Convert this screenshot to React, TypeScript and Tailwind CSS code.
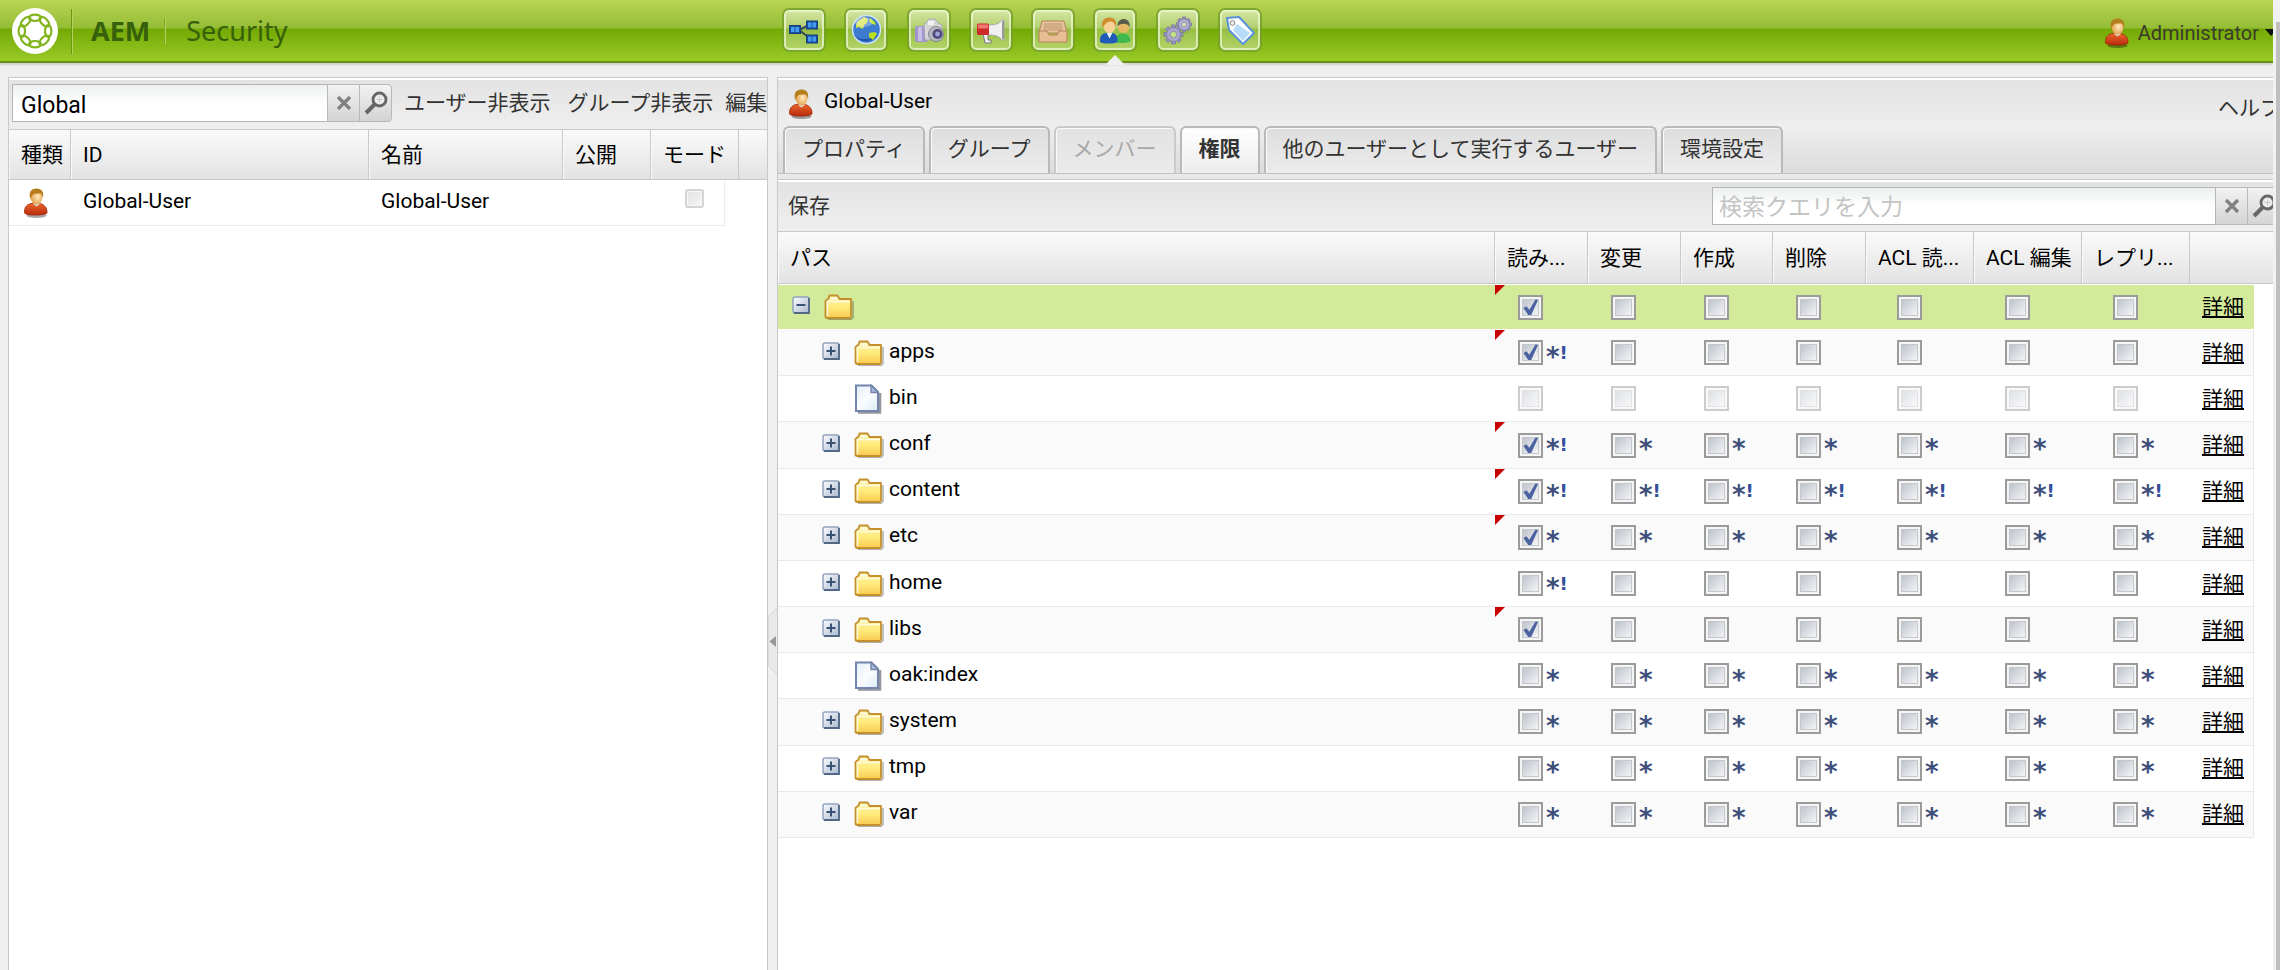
import React from "react";

type Mark = "" | "*" | "*!";

interface Row {
  name: string;
  kind: "root" | "folder" | "file";
  checked: boolean;
  first: Mark;
  rest: Mark;
  disabled?: boolean;
}

const rows: Row[] = [
  { name: "", kind: "root", checked: true, first: "", rest: "" },
  { name: "apps", kind: "folder", checked: true, first: "*!", rest: "" },
  { name: "bin", kind: "file", checked: false, first: "", rest: "", disabled: true },
  { name: "conf", kind: "folder", checked: true, first: "*!", rest: "*" },
  { name: "content", kind: "folder", checked: true, first: "*!", rest: "*!" },
  { name: "etc", kind: "folder", checked: true, first: "*", rest: "*" },
  { name: "home", kind: "folder", checked: false, first: "*!", rest: "" },
  { name: "libs", kind: "folder", checked: true, first: "", rest: "" },
  { name: "oak:index", kind: "file", checked: false, first: "*", rest: "*" },
  { name: "system", kind: "folder", checked: false, first: "*", rest: "*" },
  { name: "tmp", kind: "folder", checked: false, first: "*", rest: "*" },
  { name: "var", kind: "folder", checked: false, first: "*", rest: "*" },
];

const permissions = ["読み...", "変更", "作成", "削除", "ACL 読...", "ACL 編集", "レプリ..."];

function Person() {
  return (
    <svg width="26" height="32" viewBox="0 0 26 32" className="shrink-0" aria-hidden="true">
      <defs>
        <linearGradient id="coat" x1="0" y1="0" x2="0" y2="1">
          <stop offset="0" stopColor="#e9662b" />
          <stop offset="1" stopColor="#b92a0c" />
        </linearGradient>
        <radialGradient id="face" cx=".6" cy=".45" r=".6">
          <stop offset="0" stopColor="#ffe9bf" />
          <stop offset="1" stopColor="#e2a04a" />
        </radialGradient>
      </defs>
      <ellipse cx="13.500" cy="28.500" rx="10" ry="2.500" fill="#000" opacity=".35" />
      <path d="M1.500 26c-.5-5 2-8.500 6.500-9.500h9c4.500 1 7.300 4.500 7 9.500-2 2.500-20.500 3-22.500 0z" fill="url(#coat)" stroke="#9f2409" strokeWidth=".8" />
      <path d="M9.500 16.500l4 3 4-3z" fill="#ddd" />
      <ellipse cx="13.500" cy="10.500" rx="5.800" ry="7.200" fill="url(#face)" />
      <path d="M7.200 12C5.500 5 8 1.500 13.500 1.500S21 5 20 11c-.8-2-1.300-4-3-4.800-3 .6-5-.2-7 1.300-1.600 1-1.600 3-2.800 4.500z" fill="#b57d1b" />
    </svg>
  );
}

function Logo() {
  return (
    <svg width="46" height="46" viewBox="0 0 46 46" aria-hidden="true">
      <circle cx="23" cy="23" r="23" fill="#fff" />
      <g fill="none" stroke="#82b41e" strokeWidth="2.200">
        {[0, 45, 90, 135, 180, 225, 270, 315].map((a) => (
          <ellipse key={a} cx="23" cy="9.800" rx="6" ry="3.200" transform={"rotate(" + a + " 23 23)"} />
        ))}
      </g>
    </svg>
  );
}

const gearTeeth = [0, 45, 90, 135, 180, 225, 270, 315];

const tools: { label: string; art: React.ReactNode }[] = [
  {
    label: "Sites",
    art: (
      <g>
        <path d="M11 16L23 10M11 16l12 9" stroke="#37475d" strokeWidth="2" fill="none" />
        <g fill="#174f9c" stroke="#173f7c">
          <rect x="1.500" y="11.500" width="11" height="8" />
          <rect x="18.500" y="7" width="11" height="8" />
          <rect x="18.500" y="21" width="11" height="8" />
        </g>
        <g fill="#469cf2">
          <rect x="3" y="13" width="3.500" height="5" />
          <rect x="7.500" y="13" width="3.500" height="5" />
          <rect x="20" y="8.500" width="3.500" height="5" />
          <rect x="24.500" y="8.500" width="3.500" height="5" />
          <rect x="20" y="22.500" width="3.500" height="5" />
          <rect x="24.500" y="22.500" width="3.500" height="5" />
        </g>
      </g>
    ),
  },
  {
    label: "Web",
    art: (
      <g>
        <circle cx="16.500" cy="15.500" r="14" fill="#3d7bd0" stroke="#cfe3f5" strokeWidth="1.500" />
        <path d="M4 21c5 8 19 9 24-1-3 5-18 8-24 1z" fill="#1e54a6" />
        <path d="M8 7l6-4 4 2-1 4-3 2-1 4-4-2-3 1c0-3 0-5 2-7z" fill="#d9e74e" />
        <path d="M20 4l5 4 1 3-4-1-3-3zM19 19l6-1 2 2-4 6-4-3z" fill="#b9e11d" />
        <ellipse cx="14" cy="8" rx="9" ry="5" fill="#fff" opacity=".3" />
      </g>
    ),
  },
  {
    label: "Assets",
    art: (
      <g>
        <rect x="2" y="12" width="13" height="16" rx="2" fill="#a294cf" />
        <rect x="5" y="13" width="4" height="14" fill="#c8c0e4" />
        <path d="M11 11l5-6h6l3 4 4 2v15H12z" fill="#d6d6d8" stroke="#aaaaae" />
        <rect x="15" y="7" width="6" height="4" fill="#f2f2f4" />
        <circle cx="23" cy="20" r="7.500" fill="#b7b7c0" stroke="#85858f" />
        <circle cx="24.500" cy="20" r="5" fill="#4e4a7c" />
        <circle cx="24.500" cy="20" r="2.400" fill="#9fa5d9" />
      </g>
    ),
  },
  {
    label: "Campaigns",
    art: (
      <g>
        <path d="M8 19h5v7h3v3h-6z" fill="#f1f1f1" stroke="#777" />
        <path d="M13 11c7 0 11-1 14-5h2v20h-2c-3-4-7-5-14-5z" fill="#f0f0f0" stroke="#a8a8a8" />
        <path d="M28 7v18" stroke="#999" strokeWidth="2" />
        <rect x="2" y="9.500" width="12" height="11.500" rx="1.500" fill="#cb2a28" />
        <rect x="3" y="10.500" width="10" height="4" fill="#ef7a70" />
      </g>
    ),
  },
  {
    label: "Inbox",
    art: (
      <g stroke="#b78356">
        <path d="M5 7h22l3 12H2z" fill="#e5c4a2" />
        <path d="M7 9h18l1 8H6z" fill="#d3ab84" stroke="none" />
        <path d="M2 17h8l2 4h8l2-4h8v11H2z" fill="#e8bd93" />
      </g>
    ),
  },
  {
    label: "Users",
    art: (
      <g>
        <path d="M17 28c0-6 2-8.500 7-8.500s7.500 3 7.500 7.500c-3 2.500-11 2.500-14.500 1z" fill="#41b94c" />
        <circle cx="24.500" cy="13.500" r="5.500" fill="#e6b765" />
        <path d="M18.500 12c0-5 3-7 6-7s7 2 6 8c-2-4-8-4-12-1z" fill="#575c4c" />
        <path d="M1 28c-.5-6 2-9.500 9-9.500s9 3.500 8.500 9.500c-4 2-14 2-17.500 0z" fill="#1f5bb7" />
        <path d="M7.500 18.500l3 6 3-6z" fill="#eef3fa" />
        <ellipse cx="10.500" cy="12" rx="6" ry="7" fill="#f7d193" />
        <path d="M3.500 14C2 7 5 3.500 10.500 3.500S18 7 16.500 13c-1-4-2-5-4-5.500-5 0-6 2-9 6.500z" fill="#cf8b2c" />
      </g>
    ),
  },
  {
    label: "Tools",
    art: (
      <g fill="#9793bd" stroke="#716d9d" strokeWidth=".6">
        {gearTeeth.map((a) => (
          <rect key={a} x="9.500" y="11" width="4" height="5" transform={"rotate(" + a + " 11.500 20.500)"} />
        ))}
        {gearTeeth.map((a) => (
          <rect key={"s" + a} x="20.300" y="3" width="3.400" height="4" transform={"rotate(" + a + " 22 10.500)"} />
        ))}
        <circle cx="11.500" cy="20.500" r="7" fill="#aaa6ce" />
        <circle cx="22" cy="10.500" r="5.500" fill="#b5b1d5" />
        <circle cx="11.500" cy="20.500" r="3.200" fill="#c4e089" />
        <circle cx="22" cy="10.500" r="2.300" fill="#d9ecb2" />
      </g>
    ),
  },
  {
    label: "Tags",
    art: (
      <g>
        <path d="M3 4l12-1 15 16-11 11L5 16z" fill="#fff" stroke="#5b93d8" strokeWidth="2" strokeLinejoin="round" />
        <path d="M13 10l13 9-7 8L9 16z" fill="#b7dcf9" />
        <circle cx="8.500" cy="9" r="2.400" fill="#eee" stroke="#888" />
      </g>
    ),
  },
];

function Folder() {
  return (
    <svg width="30" height="26" viewBox="0 0 30 26" className="shrink-0" aria-hidden="true">
      <defs>
        <linearGradient id="fold" x1="0" y1="0" x2="0" y2="1">
          <stop offset="0" stopColor="#fdf3ad" />
          <stop offset=".5" stopColor="#ffec7d" />
          <stop offset="1" stopColor="#f8c94f" />
        </linearGradient>
      </defs>
      <path d="M4 25.500h23l2-2V7" fill="none" stroke="#000" opacity=".3" strokeWidth="1.500" />
      <path d="M1.500 22.500V7l3-2.500 1-3h8l2 3.500h11.500v17.500q0 1.500-1.500 1.500h-22.500q-1.500 0-1.500-1.500z" fill="url(#fold)" stroke="#c48f2e" strokeWidth="1.800" strokeLinejoin="round" />
      <path d="M3.500 22V7.500h22" fill="none" stroke="#fffbe0" strokeWidth="1.500" />
      <path d="M6.500 4.500h7" stroke="#fffbe0" strokeWidth="2" />
    </svg>
  );
}

function Sheet() {
  return (
    <svg width="30" height="30" viewBox="0 0 30 30" className="shrink-0" aria-hidden="true">
      <defs>
        <linearGradient id="page" x1="0" y1="0" x2="1" y2="1">
          <stop offset="0" stopColor="#e2edf8" />
          <stop offset=".5" stopColor="#fbfdff" />
          <stop offset="1" stopColor="#d9ebf8" />
        </linearGradient>
      </defs>
      <path d="M4 28.500h22V9" fill="none" stroke="#3d3d50" strokeWidth="2.500" opacity=".55" />
      <path d="M2 1.500h15.500L24 8v19H2z" fill="url(#page)" stroke="#7385ad" strokeWidth="2" />
      <path d="M17 1.500V8.500h7z" fill="#aabbe0" stroke="#7385ad" strokeWidth="1.400" />
    </svg>
  );
}

function Toggle({ open, name }: { open: boolean; name: string }) {
  return (
    <button type="button" aria-label={(open ? "Collapse " : "Expand ") + name} className="mb-1 size-[18px] shrink-0">
      <svg width="18" height="18" viewBox="0 0 18 18" className="block">
        <defs>
          <linearGradient id="tog" x1="0" y1="0" x2="1" y2="1">
            <stop offset="0" stopColor="#fdfeff" />
            <stop offset="1" stopColor="#a9b8cf" />
          </linearGradient>
        </defs>
        <rect x="1" y="1" width="16" height="16" rx="2" fill="url(#tog)" stroke="#92a3bd" strokeWidth="1.500" />
        <path d="M2 17h15V2" fill="none" stroke="#526885" strokeWidth="1.800" />
        <path d={open ? "M4.500 9h9" : "M4.500 9h9M9 4.500v9"} stroke="#3a5373" strokeWidth="2" />
      </svg>
    </button>
  );
}

function Permission({ label, checked, mark, disabled, wide }: { label: string; checked: boolean; mark: Mark; disabled?: boolean; wide: boolean }) {
  return (
    <div className={wide ? "flex h-[25px] items-center pl-[31px]" : "flex h-[25px] items-center pl-[23px]"}>
      <span className="relative size-[25px] shrink-0">
        <input
          type="checkbox"
          defaultChecked={checked}
          disabled={disabled}
          aria-label={label}
          className="peer block size-[25px] appearance-none border-2 border-[#9b9b9b] bg-linear-to-br from-[#b4bac4] to-white shadow-[inset_0_0_0_2px_#f5f5f5,inset_0_0_0_3px_#c4c7cb] disabled:opacity-50"
        />
        <svg viewBox="0 0 25 25" className="pointer-events-none absolute inset-0 hidden size-[25px] peer-checked:block" aria-hidden="true">
          <path d="M5.500 13l2.800-1.800 3 3.500L17.500 4.500l2.500.5-6.800 15h-3z" fill="#4a629f" />
        </svg>
      </span>
      {mark !== "" && (
        <span className="flex h-[25px] items-center pl-[3px] font-['DejaVu_Sans',sans-serif] font-bold leading-none text-[#3f4f7c]">
          <span className="pt-2 text-[26px] leading-none">*</span>
          {mark === "*!" && <span className="text-[18px] leading-none text-[#34509a]">!</span>}
        </span>
      )}
    </div>
  );
}

function SearchButtons({ clip }: { clip?: boolean }) {
  const base = "-ml-px flex h-[38px] w-[33px] shrink-0 items-center justify-center border border-[#b9b9b9] bg-linear-to-b from-[#f2f2f2] to-[#d4d4d4]";
  return (
    <>
      <button type="button" aria-label="Clear" className={base}>
        <svg width="16" height="16" viewBox="0 0 16 16" aria-hidden="true">
          <path d="M2 2l12 12M14 2L2 14" stroke="#808080" strokeWidth="3.200" />
        </svg>
      </button>
      <button type="button" aria-label="Search" className={base + (clip ? "" : " rounded-r-sm")}>
        <svg width="24" height="24" viewBox="0 0 24 24" className="shrink-0" aria-hidden="true">
          <circle cx="15.500" cy="8.500" r="6.500" fill="#ececec" stroke="#666" strokeWidth="2.800" />
          <path d="M12.500 8.500h6M15.500 5.500v6" stroke="#c9c9c9" />
          <path d="M10.500 13.500L2 22" stroke="#666" strokeWidth="4" />
        </svg>
      </button>
    </>
  );
}

const inputStyle =
  "h-[38px] min-w-0 border border-[#b5b5b5] bg-linear-to-b from-[#ecf0f0] via-white to-white pt-1 text-[23px] text-black outline-none placeholder:text-[#c4c4c4]";

const headCell = "border-r border-b border-r-[#c8c8c8] border-b-[#c8c8c8] p-0 pl-[12px] text-left font-normal shadow-[inset_1px_0_0_#fafafa]";

const tab = "h-[47px] rounded-t-[6px] border-2 border-b-0 px-[17px] pb-1 whitespace-nowrap shadow-[inset_1px_1px_0_#fafafa]";

export default function App() {
  return (
    <div className="flex min-h-screen overflow-hidden bg-[#efefef] font-['Roboto','Noto_Sans_CJK_JP',sans-serif] text-[21px] leading-[26px] text-black">
      <div className="flex min-w-0 flex-1 flex-col">
        <header className="flex h-[63px] shrink-0 items-start border-b-2 border-[#678f16] bg-[linear-gradient(#bcd455_0,#93bd35_28px,#74a904_29px,#97c927_60px)] shadow-[0_2px_2px_#d0d0d0]">
          <div className="flex w-[782px] shrink-0 items-center pt-2 pl-3 font-['Noto_Sans',sans-serif] text-[27px] text-[#37600b]">
            <Logo />
            <span className="ml-[13px] h-[45px] w-[2px] border-r border-[#b4d35c] bg-[#6d9517]" />
            <span className="ml-[18px] font-bold">AEM</span>
            <span className="ml-[14px] h-[26px] w-[2px] border-r border-[#b4d35c] bg-[#7da820]" />
            <span className="ml-5">Security</span>
          </div>
          <nav className="flex w-[480px] shrink-0 justify-between pt-2">
            {tools.map((t) => (
              <a key={t.label} href="#" aria-label={t.label} className="flex flex-col items-center">
                <span className="flex size-[44px] items-center justify-center rounded-[7px] border-2 border-[#6c9a18]/80 bg-linear-to-b from-white/50 via-white/25 to-white/35 shadow-[inset_0_0_0_2px_rgba(240,250,215,0.7)]">
                  <svg width="32" height="32" viewBox="0 0 32 32" aria-hidden="true">
                    {t.art}
                  </svg>
                </span>
                {t.label === "Users" && (
                  <svg width="20" height="10" viewBox="0 0 20 10" className="mt-[3px]" aria-hidden="true">
                    <path d="M10 0L20 10H0z" fill="#efefef" />
                  </svg>
                )}
              </a>
            ))}
          </nav>
          <button type="button" className="mt-[17px] ml-auto flex shrink-0 items-center text-[20px] text-[#3b3b2c]">
            <Person />
            <span className="ml-2">Administrator</span>
            <svg width="8" height="8" viewBox="0 0 8 8" className="ml-[6px]" aria-hidden="true">
              <path d="M0 0h12L6 7z" fill="#111" />
            </svg>
          </button>
        </header>

        <main className="flex flex-1 pt-[14px] pl-2">
          <section className="flex w-[760px] shrink-0 flex-col overflow-hidden border border-b-0 border-[#c9c9c9] bg-white pt-[2px]">
            <div className="flex h-[50px] shrink-0 items-center overflow-hidden border-b border-[#c9c9c9] bg-linear-to-b from-[#e3e3e3] to-[#efefef] pb-[3px] pl-[3px] text-[#333]">
              <input aria-label="ユーザー検索" defaultValue="Global" className={inputStyle + " w-[316px] shrink-0 px-2"} />
              <SearchButtons />
              <button type="button" className="ml-3 shrink-0">ユーザー非表示</button>
              <button type="button" className="ml-[17px] shrink-0">グループ非表示</button>
              <button type="button" className="ml-3 shrink-0">編集</button>
            </div>
            <table className="w-full table-fixed border-separate border-spacing-0">
              <colgroup>
                <col className="w-[62px]" />
                <col className="w-[298px]" />
                <col className="w-[194px]" />
                <col className="w-[88px]" />
                <col className="w-[88px]" />
                <col />
              </colgroup>
              <thead>
                <tr className="h-[50px] bg-linear-to-b from-[#fafafa] to-[#e2e2e2]">
                  <th className={headCell}>種類</th>
                  <th className={headCell}>ID</th>
                  <th className={headCell}>名前</th>
                  <th className={headCell}>公開</th>
                  <th className={headCell}>モード</th>
                  <th aria-label="余白" className="border-b border-[#c8c8c8]" />
                </tr>
              </thead>
              <tbody>
                <tr>
                  <td className="p-0">
                    <div className="flex h-[46px] items-center border-b border-[#ececec] pl-[14px]">
                      <Person />
                    </div>
                  </td>
                  <td className="p-0">
                    <div className="flex h-[46px] items-center border-b border-[#ececec] pb-1 pl-[12px]">Global-User</div>
                  </td>
                  <td className="p-0">
                    <div className="flex h-[46px] items-center border-b border-[#ececec] pb-1 pl-[12px]">Global-User</div>
                  </td>
                  <td className="p-0">
                    <div className="h-[46px] border-b border-[#ececec]" />
                  </td>
                  <td className="p-0">
                    <div className="mr-[14px] flex h-[46px] items-center border-r border-b border-[#ececec] pb-2 pl-[34px]">
                      <input type="checkbox" aria-label="モード" className="size-[19px] appearance-none rounded-[3px] border-2 border-[#d4d4d4] bg-linear-to-br from-[#e2e2e2] to-[#f6f6f6] shadow-[inset_0_0_0_1px_#f6f6f6]" />
                    </div>
                  </td>
                  <td />
                </tr>
              </tbody>
            </table>
          </section>

          <button type="button" aria-label="左パネルを折りたたむ" className="flex w-[9px] shrink-0 flex-col items-center pt-[531px]">
            <svg width="9" height="66" viewBox="0 0 9 66" aria-hidden="true">
              <path d="M9 0L0 9v48l9 9" fill="#e9e9e9" stroke="#d2d2d2" />
              <path d="M8 28v11L1.500 33.500z" fill="#999" />
            </svg>
          </button>

          <section className="flex min-w-0 flex-1 flex-col overflow-hidden border-t border-l border-[#c9c9c9] bg-white pt-[2px]">
            <div className="flex h-[94px] shrink-0 flex-col overflow-hidden border-b border-[#c2c2c2] bg-linear-to-b from-[#e3e3e3] via-[#eeeeee] to-[#dcdcdc]">
              <div className="flex h-[46px] shrink-0 items-start pt-2 pl-[10px]">
                <Person />
                <h1 className="ml-[10px]">Global-User</h1>
                <button type="button" className="-mr-2 mt-[7px] ml-auto shrink-0 text-[#333]">ヘルプ</button>
              </div>
              <div role="tablist" className="flex gap-1 pl-[5px] text-[#333]">
                <button role="tab" className={tab + " border-[#b9b9b9] bg-linear-to-b from-[#dedede] to-[#ececec]"}>プロパティ</button>
                <button role="tab" className={tab + " border-[#b9b9b9] bg-linear-to-b from-[#dedede] to-[#ececec]"}>グループ</button>
                <button role="tab" disabled className={tab + " border-[#cacaca] bg-linear-to-b from-[#e2e2e2] to-[#ebebeb] text-[#a8a8a8]"}>メンバー</button>
                <button role="tab" aria-selected="true" className={tab + " border-[#b9b9b9] bg-linear-to-b from-white to-[#ececec] font-bold"}>権限</button>
                <button role="tab" className={tab + " border-[#b9b9b9] bg-linear-to-b from-[#dedede] to-[#ececec]"}>他のユーザーとして実行するユーザー</button>
                <button role="tab" className={tab + " border-[#b9b9b9] bg-linear-to-b from-[#dedede] to-[#ececec]"}>環境設定</button>
              </div>
            </div>
            <div className="h-[6px] shrink-0 border-b border-[#c9c9c9] bg-[#e8e8e8]" />
            <div className="mt-[2px] flex h-[50px] shrink-0 items-center overflow-hidden border-b border-[#c9c9c9] bg-linear-to-b from-[#e3e3e3] to-[#efefef] pb-[2px] pl-[10px] text-[#333]">
              <button type="button" className="shrink-0">保存</button>
              <input aria-label="検索クエリ" placeholder="検索クエリを入力" className={inputStyle + " ml-auto w-[504px] shrink px-[6px]"} />
              <div className="flex w-[57px] shrink-0 overflow-hidden">
                <SearchButtons clip />
              </div>
            </div>
            <table className="h-[606px] w-full table-fixed border-separate border-spacing-0">
              <colgroup>
                <col />
                <col className="w-[93px]" />
                <col className="w-[93px]" />
                <col className="w-[92px]" />
                <col className="w-[93px]" />
                <col className="w-[108px]" />
                <col className="w-[108px]" />
                <col className="w-[108px]" />
                <col className="w-[64px]" />
                <col className="w-[19px]" />
              </colgroup>
              <thead>
                <tr className="h-[52px] bg-linear-to-b from-[#fafafa] to-[#e2e2e2]">
                  <th className={headCell}>パス</th>
                  {permissions.map((p) => (
                    <th key={p} className={headCell + " whitespace-nowrap"}>{p}</th>
                  ))}
                  <th colSpan={2} aria-label="詳細" className="border-b border-[#c8c8c8]" />
                </tr>
              </thead>
              <tbody>
                {rows.map((r, i) => {
                  const cell =
                    i === 0
                      ? "border-y border-y-white bg-[#d3ea9a] p-0"
                      : i % 2 === 1
                        ? "border-b border-[#e9e9e9] bg-[#fafafa] p-0"
                        : "border-b border-[#e9e9e9] bg-white p-0";
                  return (
                    <tr key={r.name} className="h-[46px]">
                      <td className={cell}>
                        <div className={i === 0 ? "flex items-center pl-[14px]" : "flex items-center pl-[44px]"}>
                          {r.kind === "file" ? <span className="w-[18px]" /> : <Toggle open={i === 0} name={r.name || "/"} />}
                          <span className="ml-[14px] flex h-[30px] items-center">{r.kind === "file" ? <Sheet /> : <Folder />}</span>
                          <span className="ml-[5px] pb-1">{r.name}</span>
                        </div>
                      </td>
                      {permissions.map((p, c) => (
                        <td key={p} className={cell + " relative"}>
                          {c === 0 && r.checked && (
                            <svg width="10" height="10" viewBox="0 0 10 10" className="absolute top-0 left-0" aria-hidden="true">
                              <path d="M0 0h10L0 10z" fill="#c80000" />
                            </svg>
                          )}
                          <Permission label={r.name + " " + p} checked={c === 0 && r.checked} mark={c === 0 ? r.first : r.rest} disabled={r.disabled} wide={c > 3} />
                        </td>
                      ))}
                      <td className={cell + (i === 0 ? "" : " border-r")}>
                        <a href="#" className="ml-[12px] underline underline-offset-2">詳細</a>
                      </td>
                      <td />
                    </tr>
                  );
                })}
              </tbody>
            </table>
          </section>
        </main>
      </div>
      <div className="flex w-[7px] shrink-0 flex-col bg-[#f1f1f1] pt-[22px] pl-[3px]">
        <div className="flex-1 bg-[#bfbfbf]" />
      </div>
    </div>
  );
}
